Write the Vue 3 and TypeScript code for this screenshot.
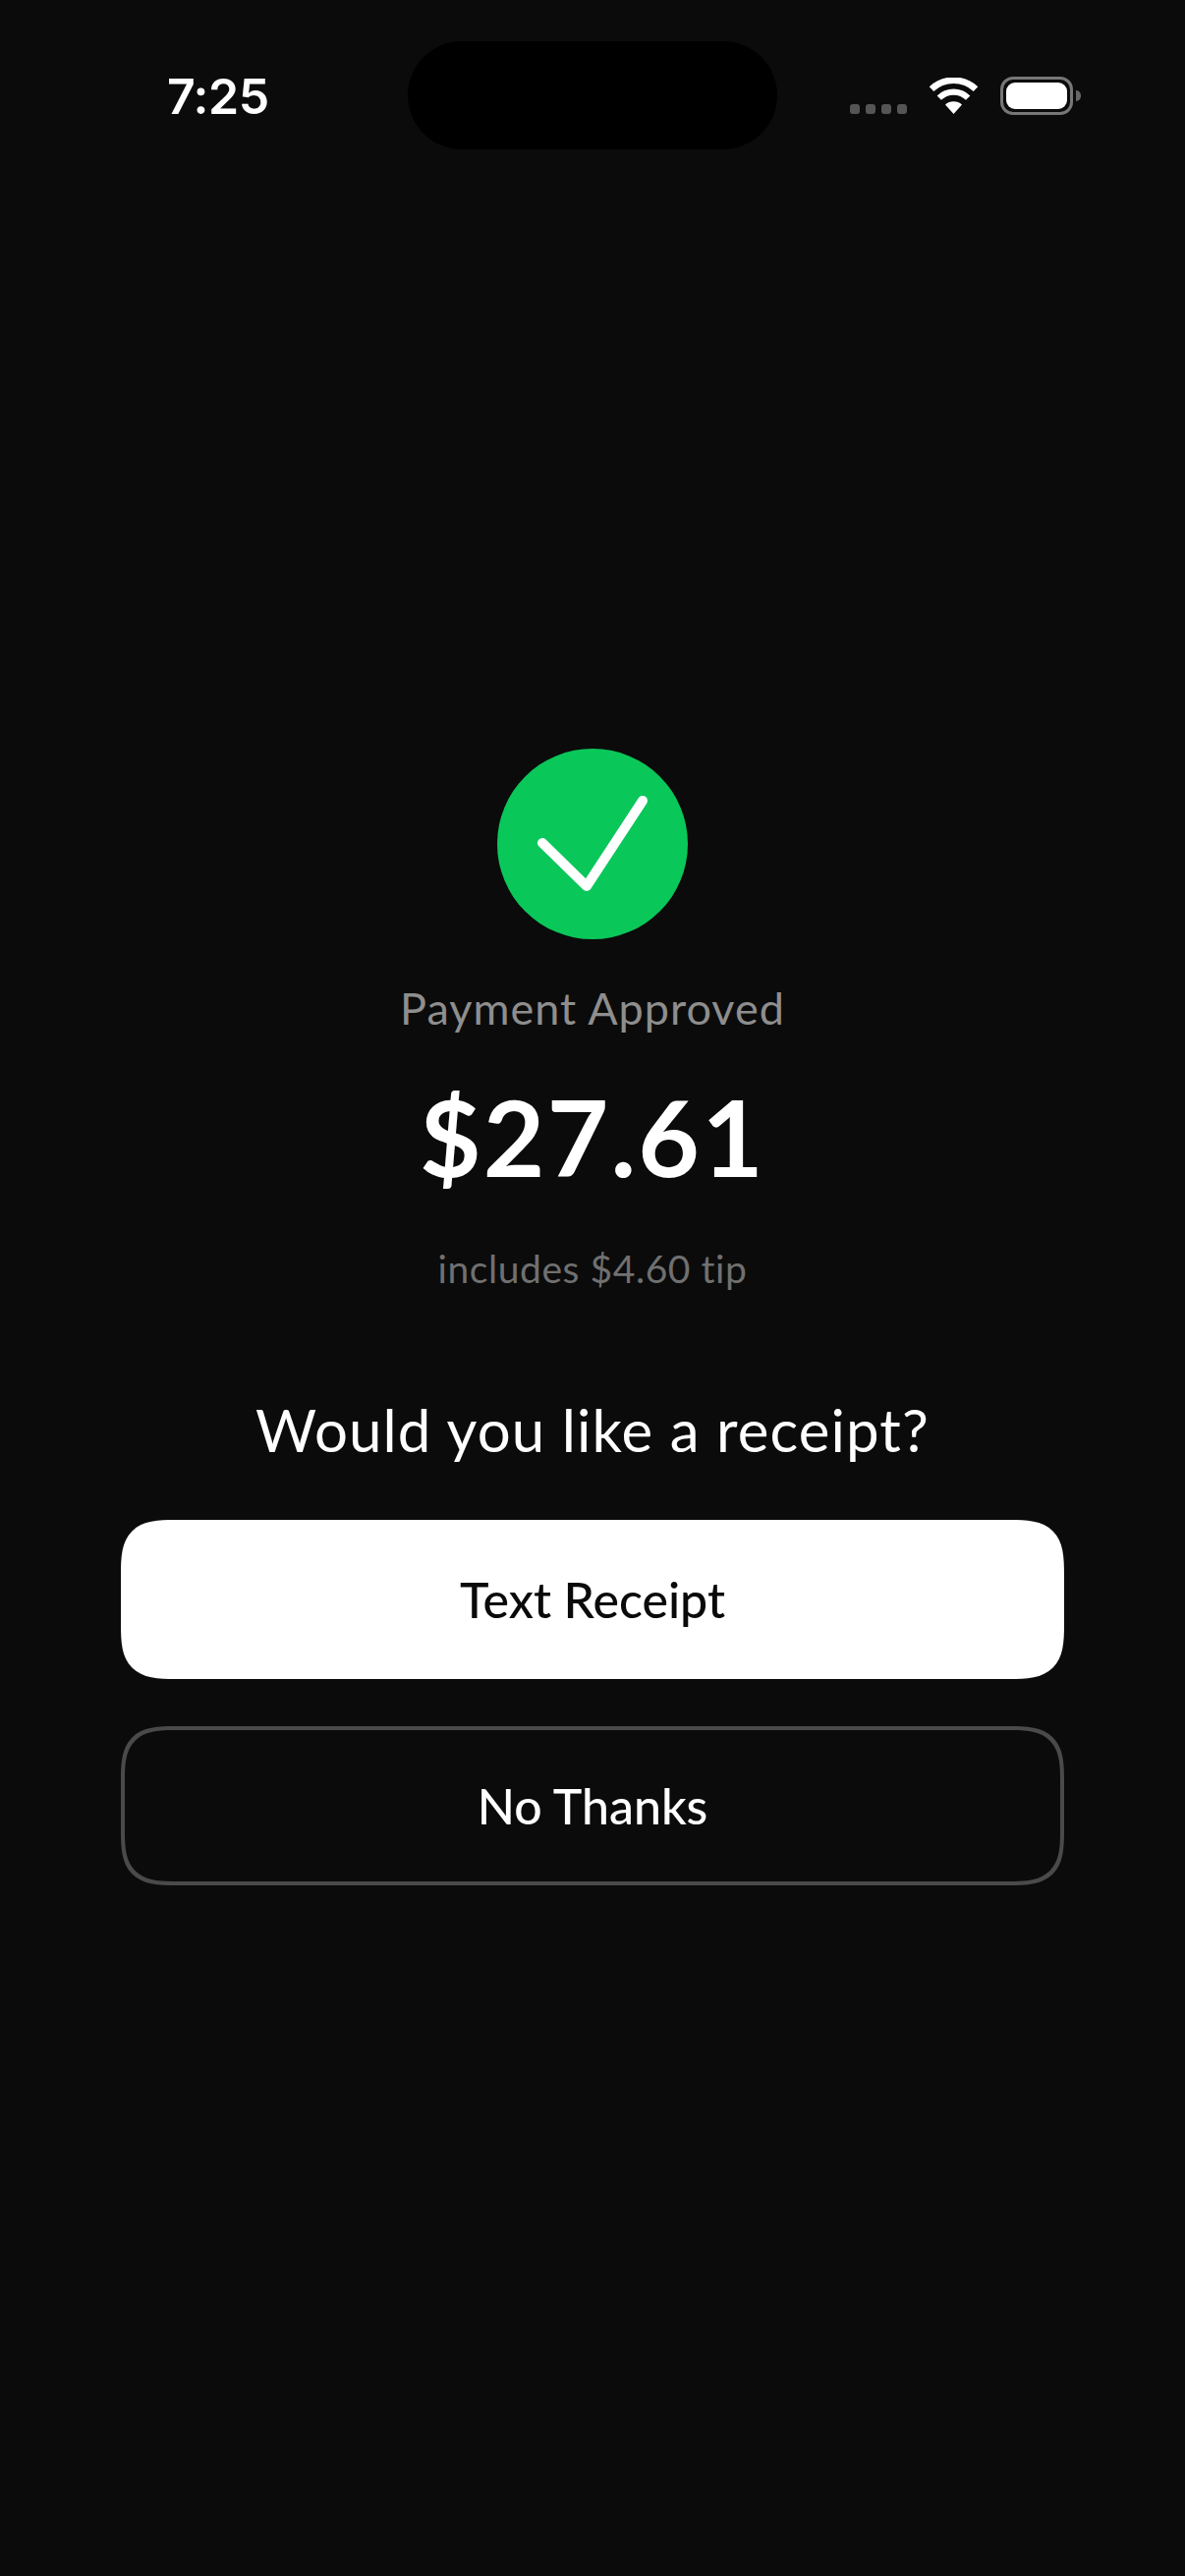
<script setup lang="ts">
const dots: number[] = [0, 1, 2, 3]
</script>

<template>
  <div class="page">
    <header class="status">
      <span class="time">7:25</span>
      <div class="island"></div>
      <div class="icons">
        <div class="dots"><i v-for="d in dots" :key="d" class="dot"></i></div>
        <svg class="wifi" width="51" height="37" viewBox="0 0 51 37">
          <path d="M25.5 37 L17 27.6 A12.6 12.6 0 0 1 34 27.6 Z" fill="#fff" />
          <path d="M10.8 20.6 A21 21 0 0 1 40.2 20.6" fill="none" stroke="#fff" stroke-width="6.2" />
          <path d="M3 11.6 A33 33 0 0 1 48 11.6" fill="none" stroke="#fff" stroke-width="6.6" />
        </svg>
        <div class="battery">
          <div class="shell"><div class="level"></div></div>
          <div class="nub"></div>
        </div>
      </div>
    </header>

    <main class="main">
      <div class="badge">
        <svg width="194" height="194" viewBox="0 0 194 194">
          <path d="M46 96 L91 140 L148 53" fill="none" stroke="#fff" stroke-width="10" stroke-linecap="round" stroke-linejoin="round" />
        </svg>
      </div>
      <p class="approved">Payment Approved</p>
      <p class="amount">$27.61</p>
      <p class="tip">includes $4.60 tip</p>
      <p class="question">Would you like a receipt?</p>
      <button class="btn primary">Text Receipt</button>
      <button class="btn secondary">No Thanks</button>
    </main>
  </div>
</template>

<style>
html, body { margin: 0; background: #0b0b0b; }
</style>

<style scoped>
.page {
  width: 1206px;
  height: 2622px;
  background: #0b0b0b;
  font-family: "Lato", "Noto Sans", sans-serif;
  color: #fff;
  overflow: hidden;
}
.status {
  height: 110px;
  padding-top: 42px;
  display: grid;
  grid-template-columns: 415px 376px 1fr;
  align-items: start;
}
.time {
  font-family: "Inter", sans-serif;
  font-weight: 600;
  font-size: 50px;
  line-height: 50px;
  margin: 31px 0 0 170px;
  letter-spacing: -0.5px;
}
.island {
  height: 110px;
  background: #000;
  border-radius: 55px;
}
.icons {
  display: flex;
  align-items: flex-end;
  margin-top: 36px;
  padding-left: 74px;
}
.dots { display: flex; gap: 6px; }
.dot {
  display: block;
  width: 10px;
  height: 10px;
  border-radius: 3px;
  background: #555;
  margin-bottom: 1px;
}
.wifi { margin-left: 22px; margin-bottom: 1px; }
.battery { display: flex; align-items: center; margin-left: 22px; }
.shell {
  width: 74px;
  height: 39px;
  box-sizing: border-box;
  border: 3px solid #777;
  border-radius: 13px;
  padding: 3px;
}
.level {
  height: 100%;
  background: #fff;
  border-radius: 9px;
}
.nub {
  width: 5px;
  height: 11px;
  margin-left: 3px;
  background: #666;
  border-radius: 0 5px 5px 0;
}
.main {
  padding: 610px 123px 0;
  display: flex;
  flex-direction: column;
  align-items: center;
}
.badge {
  width: 194px;
  height: 194px;
  border-radius: 50%;
  background: #0ac75a;
}
.badge svg { display: block; }
.main p { margin: 0; text-align: center; }
.main .approved {
  margin-top: 42px;
  font-size: 45px;
  line-height: 56px;
  letter-spacing: 1px;
  color: #8e8e8e;
}
.main .amount {
  margin-top: 37px;
  font-size: 108px;
  line-height: 130px;
  letter-spacing: 2.2px;
  font-weight: 700;
}
.main .tip {
  margin-top: 45px;
  font-size: 39px;
  line-height: 50px;
  letter-spacing: 0.55px;
  color: #707070;
}
.main .question {
  margin-top: 101px;
  font-size: 60px;
  line-height: 76px;
  letter-spacing: 1.1px;
}
.btn {
  width: 960px;
  height: 162px;
  border-radius: 56px;
  corner-shape: superellipse(1.6);
  font-family: inherit;
  font-size: 50px;
  box-sizing: border-box;
  padding: 0;
}
.primary {
  margin-top: 54px;
  border: 0;
  background: #fff;
  color: #0a0a0a;
  font-weight: 500;
}
.secondary {
  margin-top: 48px;
  border: 4px solid #4a4a4a;
  background: transparent;
  color: #fff;
  font-weight: 500;
}
</style>
